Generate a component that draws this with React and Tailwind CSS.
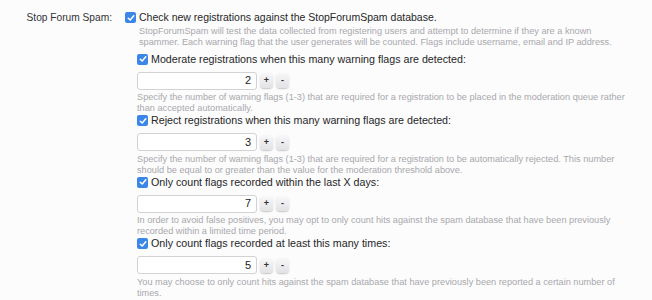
import React from 'react';

const options = [
    {
        label: 'Moderate registrations when this many warning flags are detected:',
        value: 2,
        hint: 'Specify the number of warning flags (1-3) that are required for a registration to be placed in the moderation queue rather than accepted automatically.',
    },
    {
        label: 'Reject registrations when this many warning flags are detected:',
        value: 3,
        hint: 'Specify the number of warning flags (1-3) that are required for a registration to be automatically rejected. This number should be equal to or greater than the value for the moderation threshold above.',
    },
    {
        label: 'Only count flags recorded within the last X days:',
        value: 7,
        hint: 'In order to avoid false positives, you may opt to only count hits against the spam database that have been previously recorded within a limited time period.',
    },
    {
        label: 'Only count flags recorded at least this many times:',
        value: 5,
        hint: 'You may choose to only count hits against the spam database that have previously been reported a certain number of times.',
    },
];

function Check() {
    return (
        <span className="inline-flex items-center justify-center w-[11px] h-[11px] shrink-0 rounded-[2px] bg-[#3b87e8]">
            <svg width="8" height="8" viewBox="0 0 8 8" fill="none">
                <path d="M1.3 4.2 L3.2 6 L6.8 1.8" stroke="white" strokeWidth="1.5" strokeLinecap="round" strokeLinejoin="round" />
            </svg>
        </span>
    );
}

function SpinButton({ children }) {
    return (
        <button className="w-[13px] h-[15px] flex items-center justify-center rounded-[4px] bg-gradient-to-b from-[#f8f8f9] to-[#e2e2e5] shadow-[0_1px_1.5px_rgba(0,0,0,0.22)] text-[9px] font-bold leading-none text-[#333]">
            {children}
        </button>
    );
}

function Option({ option }) {
    return (
        <div className="flex flex-col">
            <label className="flex items-center gap-[3px] h-[13px] text-[10.7px] leading-[13px] text-[#262626]">
                <Check />
                <span>{option.label}</span>
            </label>
            <div className="flex items-center gap-[3px] mt-[6px]">
                <div className="w-[120px] h-[18px] rounded-[3px] border border-[#d2d2d6] bg-white flex items-center justify-end pr-[5px] text-[11px] text-[#222]">
                    {option.value}
                </div>
                <SpinButton>+</SpinButton>
                <SpinButton>-</SpinButton>
            </div>
            <p className="mt-[2.5px] w-[496px] text-[9.2px] leading-[11px] text-[#a8a8ab]">{option.hint}</p>
        </div>
    );
}

export default function App() {
    return (
        <div className="w-[652px] h-[300px] overflow-hidden bg-[#fcfcfd] font-['Liberation_Sans',Arial,sans-serif] flex">
            {/* Row label */}
            <div className="w-[112px] pt-[11px] text-right text-[10.2px] leading-[13px] text-[#333]">Stop Forum Spam:</div>

            {/* Options */}
            <div className="pl-[13px] pt-[11px] flex flex-col">
                <label className="flex items-center gap-[3px] h-[13px] text-[10.5px] leading-[13px] text-[#262626]">
                    <Check />
                    <span>Check new registrations against the StopForumSpam database.</span>
                </label>
                <p className="mt-[1.5px] pl-[14px] w-[499px] text-[9.2px] leading-[11px] text-[#a8a8ab]">
                    StopForumSpam will test the data collected from registering users and attempt to determine if they are a known spammer. Each warning flag that the user generates will be counted. Flags include username, email and IP address.
                </p>
                <div className="pl-[12px] mt-[5px] flex flex-col">
                    {options.map((option) => (
                        <Option key={option.label} option={option} />
                    ))}
                </div>
            </div>
        </div>
    );
}
